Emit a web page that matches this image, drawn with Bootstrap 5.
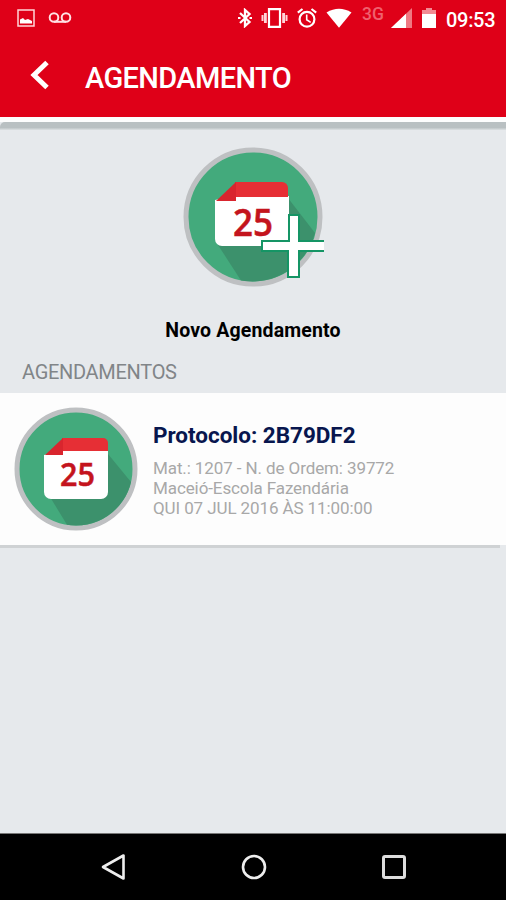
<!DOCTYPE html>
<html lang="pt-BR">
<head>
<meta charset="utf-8">
<meta name="viewport" content="width=device-width, initial-scale=1">
<title>Agendamento</title>
<link href="https://cdn.jsdelivr.net/npm/bootstrap@5.3.0/dist/css/bootstrap.min.css" rel="stylesheet">
<style>
  body { font-family: Roboto, "Liberation Sans", sans-serif; background: #e6e9ec; color: #000; }
  svg { display: block; flex: none; }
  .screen { height: 900px; }
  .top-area { background: #df0018; height: 117px; }
  .status { height: 36px; padding: 0 11px 0 17px; }
  .voicemail { margin-left: 13px; }
  .status-right { gap: 9px; }
  .network { font-size: 17.5px; line-height: 12px; color: #f0606e; font-weight: 500; width: 23px; margin: 0 -3px 9px 1px; }
  .clock { font-size: 20px; font-weight: 500; line-height: 20px; width: 49px; margin: 3px 0 0 1px; white-space: nowrap; letter-spacing: -.3px; }
  .title-bar { height: 81px; padding-left: 30px; }
  .page-title { font-size: 29px; font-weight: 500; line-height: 34px; margin: 3px 0 0 36px; letter-spacing: -.6px; }
  .header-gap { height: 5px; background: #fdfdfd; }
  .header-shade { height: 8px; background: linear-gradient(#b9c0c2 0 70%, #dde1e3); border-radius: 5px 0 0 0; }
  .new-item { font-size: 19.5px; font-weight: 700; line-height: 24px; padding-top: 14px; }
  .new-label { margin-top: 31px; letter-spacing: .15px; color: #000; }
  .section-title { font-size: 20px; line-height: 24px; color: #818588; margin: 17px 0 0 22px; font-weight: 400; letter-spacing: -.3px; }
  .booking { background: #fdfdfd; height: 152px; margin-top: 9px; padding: 14px; }
  .booking-text { margin-left: 15px; }
  .booking-title { font-size: 22.5px; line-height: 28px; font-weight: 700; color: #08164e; margin: 14px 0 10px; letter-spacing: -.03px; }
  .booking-info { font-size: 17px; line-height: 19.9px; color: #a8a8a8; letter-spacing: -.1px; }
  .booking-rule { height: 3px; width: 500px; background: #cfd2d4; }
  .nav-keys { height: 67px; background: #000; border-top: 1px solid #777; padding: 0 99px 0 101px; }
</style>
</head>
<body>
<div class="screen d-flex flex-column overflow-hidden">
  <header class="top-area text-white">
    <div class="status d-flex align-items-center">
      <svg width="18" height="18" viewBox="0 0 18 18"><path d="M1 1h16v16H1z" fill="none" stroke="#ffd5d8" stroke-width="1.5"/><path d="M3 14.500v-4l3-1.500 2 2 3-1 4 2v2.500z" fill="#fff"/></svg>
      <svg class="voicemail" width="24" height="12" viewBox="0 0 24 12"><g fill="none" stroke="#ffe1e4" stroke-width="2"><circle cx="6" cy="5.500" r="4.300"/><circle cx="18" cy="5.500" r="4.300"/><path d="M6 9.800h12"/></g></svg>
      <div class="status-right d-flex align-items-center ms-auto">
        <svg width="14" height="20" viewBox="0 0 14 20"><path d="M2 5l9.500 9L7 18V2l4.500 4L2 15" fill="none" stroke="#fff" stroke-width="2.300"/><path d="M0 9h2.500v2H0zM11.500 9H14v2h-2.500z" fill="#fff"/></svg>
        <svg width="27" height="20" viewBox="0 0 27 20"><path d="M8 1.200h11v17.600H8z" fill="none" stroke="#fff" stroke-width="2.200"/><path d="M3 5h2.800v10H3zM21.200 5H24v10h-2.800zM.5 7h2v6h-2zM24.500 7h2v6h-2z" fill="#ffd5d9"/></svg>
        <svg width="20" height="20" viewBox="0 0 20 20"><g fill="none" stroke="#fff"><circle cx="10" cy="11.300" r="7.400" stroke-width="2.200"/><path d="M.8 4.600L5.500 1M19.200 4.600L14.500 1" stroke-width="2.200"/><path d="M9.700 6.500v5.200l4 2.600" stroke-width="1.600"/></g></svg>
        <svg width="26" height="20" viewBox="0 0 26 20"><path d="M.5 4.500Q13-3 25.500 4.500L13 19.700z" fill="#fff"/></svg>
        <span class="network">3G</span>
        <svg width="22" height="20" viewBox="0 0 22 20"><path d="M0 20L21 0v20z" fill="#ef7882"/><path d="M0 20L15 5.700V20z" fill="#fff"/></svg>
        <svg width="14" height="20" viewBox="0 0 14 20"><path d="M0 2h4V0h6v2h4v4H0z" fill="#f28a93"/><path d="M0 6h14v14H0z" fill="#fff"/></svg>
        <span class="clock">09:53</span>
      </div>
    </div>
    <div class="title-bar d-flex align-items-center">
      <svg width="19" height="34" viewBox="0 0 19 34"><path d="M17 2.500L4 15l13 12.500" fill="none" stroke="#fff" stroke-width="5"/></svg>
      <h1 class="page-title">AGENDAMENTO</h1>
    </div>
  </header>
  <div class="header-gap"></div>
  <div class="header-shade"></div>

  <main class="flex-grow-1">
    <a href="#" class="new-item d-flex flex-column align-items-center text-decoration-none">
      <svg width="142" height="144" viewBox="0 0 142 144">
        <circle cx="71" cy="73" r="67" fill="#43aa7c" stroke="#bec0c2" stroke-width="5"/>
        <path d="M36 101L59 136.400A64.500 64.500 0 0 0 133 89L106 54z" fill="#3c916c"/>
        <path d="M33 56l20-4h54v43a7 7 0 0 1-7 7H40a7 7 0 0 1-7-7z" fill="#fff"/>
        <path d="M53 38h47a6 6 0 0 1 6 6v9H53z" fill="#e62f35"/><path d="M54 38v19H34z" fill="#d9252e"/>
        <text x="51" y="92" textLength="40" lengthAdjust="spacingAndGlyphs" font-family="Open Sans" font-weight="600" font-size="37" fill="#c4141d" stroke="#c4141d" stroke-width=".5">25</text>
        <path d="M107 71h10v26h26v10h-26v26h-11v-26H80V97h27z" fill="#fff" stroke="#159565" stroke-width="2"/>
      </svg>
      <span class="new-label">Novo Agendamento</span>
    </a>
    <h2 class="section-title">AGENDAMENTOS</h2>
    <div class="booking d-flex align-items-start">
      <svg width="124" height="124" viewBox="0 0 124 124">
        <circle cx="62" cy="62" r="59" fill="#43aa7c" stroke="#bec0c2" stroke-width="5"/>
        <path d="M33 85L53 117.800A56.500 56.500 0 0 0 117 75L94 47z" fill="#3c916c"/>
        <path d="M30 48l18-4h46v41a7 7 0 0 1-7 7H37a7 7 0 0 1-7-7z" fill="#fff"/>
        <path d="M48 31h41a5 5 0 0 1 5 5v8H48z" fill="#e62f35"/><path d="M49 31v17H31z" fill="#d9252e"/>
        <text x="46" y="79" textLength="35" lengthAdjust="spacingAndGlyphs" font-family="Open Sans" font-weight="600" font-size="32" fill="#c4141d" stroke="#c4141d" stroke-width=".5">25</text>
      </svg>
      <div class="booking-text text-nowrap">
        <h3 class="booking-title">Protocolo: 2B79DF2</h3>
        <div class="booking-info">Mat.: 1207 - N. de Ordem: 39772<br>Maceió-Escola Fazendária<br>QUI 07 JUL 2016 ÀS 11:00:00</div>
      </div>
    </div>
    <div class="booking-rule"></div>
  </main>

  <nav class="nav-keys d-flex align-items-center justify-content-between">
    <svg width="26" height="28" viewBox="0 0 26 28"><path d="M2 14L22.500 2.500v23z" fill="none" stroke="#eee" stroke-width="2.600" stroke-linejoin="round"/></svg>
    <svg width="26" height="26" viewBox="0 0 26 26"><circle cx="13" cy="13" r="11" fill="none" stroke="#eee" stroke-width="2.600"/></svg>
    <svg width="26" height="26" viewBox="0 0 26 26"><rect x="2.500" y="2.500" width="21" height="21" rx="1.500" fill="none" stroke="#ddd" stroke-width="3"/></svg>
  </nav>
</div>
<script src="https://cdn.jsdelivr.net/npm/bootstrap@5.3.0/dist/js/bootstrap.bundle.min.js"></script>
</body>
</html>
